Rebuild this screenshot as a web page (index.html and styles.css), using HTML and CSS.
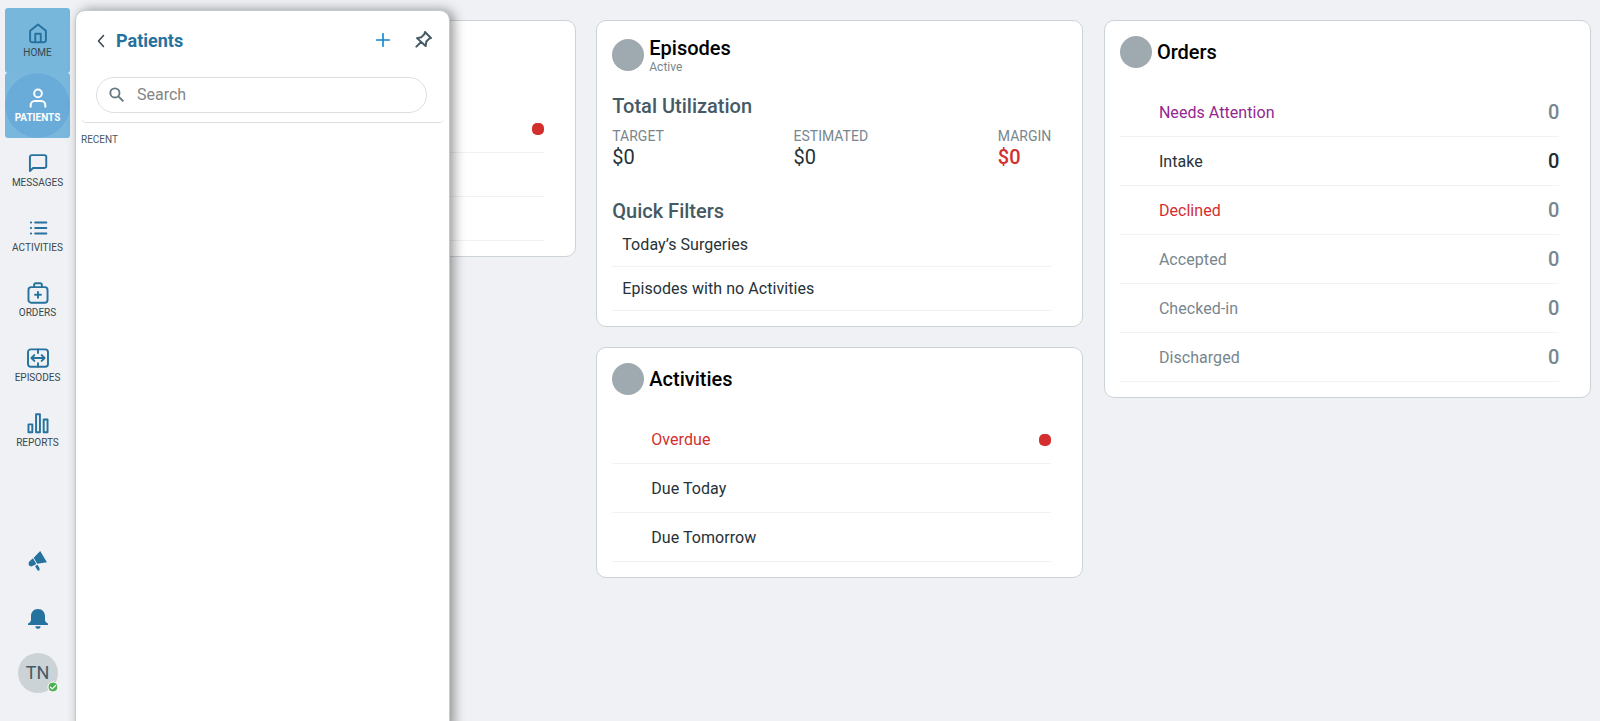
FILE: index.html
```html
<!DOCTYPE html>
<html lang="en">
<head>
<meta charset="utf-8">
<title>Dashboard</title>
<link rel="stylesheet" href="styles.css">
</head>
<body>
<div class="app">
  <nav class="sidebar">
    <a class="nav-item hover"><svg viewBox="0 0 24 24"><path d="M3.4 9.6V20.200a1.800 1.800 0 0 0 1.800 1.800H18.800a1.800 1.800 0 0 0 1.800-1.800V9.600L12 2.600zM9 21.800V12.800h6V21.800"/></svg><span>HOME</span></a>
    <a class="nav-item current"><svg viewBox="0 0 24 24"><circle cx="12" cy="7" r="4.200"/><path d="M4 21.600V19.800a4.500 4.500 0 0 1 4.500-4.500h7A4.500 4.500 0 0 1 20 19.800V21.600"/></svg><span>PATIENTS</span></a>
    <a class="nav-item"><svg viewBox="0 0 24 24"><path d="M3.200 20.800V5.400a2 2 0 0 1 2-2H19a2 2 0 0 1 2 2V15.400a2 2 0 0 1-2 2H6.600z"/></svg><span>MESSAGES</span></a>
    <a class="nav-item"><svg class="list" viewBox="0 0 24 24"><path d="M9 6H21M9 12H21M9 18H21M4.300 6h.1M4.300 12h.1M4.300 18h.1"/></svg><span>ACTIVITIES</span></a>
    <a class="nav-item"><svg viewBox="0 0 24 24"><rect x="1.600" y="5.600" width="20.800" height="17" rx="3"/><path d="M7.800 5.400V3a1.700 1.700 0 0 1 1.700-1.700h5A1.700 1.700 0 0 1 16.200 3V5.400M12 10.800v6.400M8.800 14h6.400"/></svg><span>ORDERS</span></a>
    <a class="nav-item"><svg viewBox="0 0 24 24"><rect x="1.100" y="2.600" width="21.800" height="19" rx="3"/><path d="M12 2.800V6.500M12 17.600V21.400M5 12H19M8 8.800L4.800 12L8 15.200M16 8.800L19.200 12L16 15.200"/></svg><span>EPISODES</span></a>
    <a class="nav-item"><svg viewBox="0 0 24 24"><path d="M1.600 13.500h4.200V22H1.600zM9.900 2.500h4.200V22H9.900zM18.200 8.200h4.200V22H18.200z"/></svg><span>REPORTS</span></a>
    <div class="sidebar-foot">
      <svg class="solid" viewBox="0 0 20 20"><path d="M12.200 0L18.900 11.200 9.200 12.800 5.700 6.800z"/><path d="M5 7.200L8.300 13 4.600 15.100C3 15.800 1.500 15.300.9 14.100S.5 11 1.800 9.900z"/><path d="M7 15l2.800-1.300c.3 1.200.9 1.600 1.300 2.500.6 1.300.8 2.900-.1 3.500-1 .3-1.700-.3-2.200-1.400z"/></svg>
      <svg class="solid" viewBox="0 0 20 20"><path d="M10 0c4.600 0 7 3.400 7 7.300v3c0 2.200.8 3 3 4.300V16H0v-1.400c2.200-1.300 3-2.100 3-4.300v-3C3 3.400 5.400 0 10 0zM7.400 17.200h5.200c0 1.500-1 2.600-2.600 2.600s-2.600-1.100-2.600-2.600z"/></svg>
      <div class="avatar">TN<svg viewBox="0 0 12 12"><circle cx="6" cy="6" r="5" /><path d="M3.500 6.200l1.800 1.700 3.300-3.400"/></svg></div>
    </div>
  </nav>

  <main class="board">
    <section class="card card-back">
      <div class="row short"><i class="dot"></i></div>
      <div class="row short"></div>
      <div class="row short"></div>
    </section>

    <div class="column">
      <section class="card">
        <header class="card-head tall"><i class="disc"></i><div><h2>Episodes</h2><p>Active</p></div></header>
        <h3>Total Utilization</h3>
        <div class="stats">
          <div><span>TARGET</span><b>$0</b></div>
          <div><span>ESTIMATED</span><b>$0</b></div>
          <div class="negative"><span>MARGIN</span><b>$0</b></div>
        </div>
        <h3>Quick Filters</h3>
        <div class="row short">Today’s Surgeries</div>
        <div class="row short">Episodes with no Activities</div>
      </section>
      <section class="card">
        <header class="card-head"><i class="disc"></i><h2>Activities</h2></header>
        <div class="row red">Overdue<i class="dot"></i></div>
        <div class="row">Due Today</div>
        <div class="row">Due Tomorrow</div>
      </section>
    </div>

    <section class="card">
      <header class="card-head"><i class="disc"></i><h2>Orders</h2></header>
      <div class="row purple">Needs Attention<b>0</b></div>
      <div class="row strong">Intake<b>0</b></div>
      <div class="row red">Declined<b>0</b></div>
      <div class="row gray">Accepted<b>0</b></div>
      <div class="row gray">Checked-in<b>0</b></div>
      <div class="row gray">Discharged<b>0</b></div>
    </section>
  </main>

  <aside class="drawer">
    <div class="drawer-top">
      <header class="drawer-head">
        <svg class="back" viewBox="0 0 8 14"><path d="M6.500 1.500L1.500 7L6.500 12.500"/></svg>
        <h1>Patients</h1>
        <svg class="plus" viewBox="0 0 14 14"><path d="M7 .7V13.300M.7 7H13.300"/></svg>
        <svg class="pin" viewBox="0 0 16 16"><path d="M9.400 1L15 6.600L13.400 7.200L10.700 9.900L10 14.200L1.900 6.700L6.100 5.800L8.900 2.800zM5.700 10.400L1.300 14.700"/></svg>
      </header>
      <div class="search"><svg viewBox="0 0 16 16"><circle cx="6.300" cy="6.300" r="4.900"/><path d="M10 10L14.700 14.700"/></svg><span>Search</span></div>
    </div>
    <p class="section-label">RECENT</p>
  </aside>
</div>
</body>
</html>
```
FILE: styles.css
```css
* { box-sizing: border-box; }
body { margin: 0; font-family: Roboto, "Liberation Sans", sans-serif; color: #263238; background: #f0f1f4; }
h1, h2, h3, p { margin: 0; }
i { font-style: normal; }
svg { fill: none; stroke-linecap: round; stroke-linejoin: round; flex: none; }
.app { position: relative; height: 721px; overflow: hidden; display: flex; }

.sidebar { width: 75px; flex: none; padding: 8px 5px 28px; display: flex; flex-direction: column; }
.nav-item { width: 65px; height: 65px; flex: none; border-radius: 3px; display: flex; flex-direction: column; align-items: center; padding-top: 14px; font-size: 10px; line-height: 12px; color: #37474f; }
.nav-item svg { width: 22px; height: 22px; margin-bottom: 3px; margin-left: 1px; stroke: #25729e; stroke-width: 2.100; }
.nav-item svg.list { stroke-width: 2.400; }
.hover { background: #78b7dc; }
.current { background: radial-gradient(circle closest-side, #69acd9 98%, #7ab7dc 100%); color: #fff; font-weight: 700; }
.nav-item.current svg { stroke: #fff; stroke-width: 2.200; }
.sidebar-foot { margin-top: auto; display: flex; flex-direction: column; align-items: center; }
.solid { width: 20px; height: 20px; fill: #25729e; margin-bottom: 38px; }
.solid + .solid { margin-bottom: 24px; }
.avatar { position: relative; width: 40px; height: 40px; border-radius: 50%; background: #cbd3d6; color: #455a64; font-size: 18px; line-height: 40px; text-align: center; }
.avatar svg { position: absolute; right: -1px; bottom: 0; width: 12px; height: 12px; }
.avatar circle { fill: #4caf50; stroke: #fff; stroke-width: 1; }
.avatar path { stroke: #fff; stroke-width: 1.200; }

.board { flex: none; display: grid; grid-template-columns: repeat(3, 487px); gap: 20.6px; align-items: start; padding: 20px 0 0 13.7px; }
.column { display: grid; gap: 20px; }
.card { background: #fff; border: 1px solid #cbd3d8; border-radius: 10px; padding: 15px 31px 15px 15px; }
.card-back { padding-top: 88px; }
.card-head { display: flex; align-items: center; gap: 5px; height: 32px; margin-bottom: 20px; }
.card-head.tall { height: 38px; margin-bottom: 20px; }
.tall h2 { line-height: 22px; }
.tall p { font-size: 12px; line-height: 14px; color: #78868e; padding-top: 1px; margin-bottom: -1px; }
.disc { width: 32px; height: 32px; border-radius: 50%; background: #9eaab0; }
h2 { font-size: 20px; line-height: 24px; font-weight: 500; color: #000; }
h3 { font-size: 20px; line-height: 24px; font-weight: 500; color: #455a64; }
.stats { display: flex; justify-content: space-between; margin: 10px 0 30px; }
.stats span { display: block; font-size: 14px; line-height: 16px; color: #78868e; }
.stats b { display: block; font-size: 20px; line-height: 24px; margin-top: 1px; font-weight: 400; }
.stats .negative b { color: #d32f2f; font-weight: 500; }
.row { display: flex; align-items: center; justify-content: space-between; height: 49px; padding-left: 39px; border-bottom: 1px solid #f0f2f3; font-size: 16px; letter-spacing: .06px; }
.row.short { height: 44px; padding-left: 10px; }
.row b { font-size: 20px; font-weight: 500; letter-spacing: 0; color: #78868e; margin-right: -.6px; }
.row.strong b { color: #212b31; }
.red { color: #d32f2f; }
.purple { color: #93278f; }
.gray { color: #78868e; }
.dot { width: 12px; height: 12px; border-radius: 5px; background: #d32f2f; margin: 2px 0 0 auto; }
.short .dot { margin: 0 0 3px auto; }

.drawer { position: absolute; left: 75px; top: 10px; width: 375px; height: 720px; padding: 0 5px; background: #fff; border: 1px solid #c3cbd0; border-radius: 10px 10px 0 0; box-shadow: 4px 0 12px rgba(0, 0, 0, .4); }
.drawer-top { height: 112px; padding: 0 17px 0 15px; border-bottom: 1px solid #dcdfe0; border-radius: 0 0 5px 5px; }
.drawer-head { height: 60px; margin-bottom: 6px; display: flex; align-items: center; }
.drawer h1 { flex: 1; font-size: 18px; line-height: 24px; font-weight: 700; color: #25729e; margin-left: 11px; }
.back { width: 8px; height: 14px; stroke: #37474f; stroke-width: 1.500; margin-left: 1px; }
.plus { width: 14px; height: 14px; stroke: #0f86cc; stroke-width: 1.600; margin: 0 25.500px 3px 0; }
.pin { width: 17px; height: 17px; stroke: #455a64; stroke-width: 1.900; margin: 0 -5px 4px 0; }
.search { height: 36px; border: 1px solid #dcdfe0; border-radius: 18px; padding-left: 12px; display: flex; align-items: center; gap: 13px; font-size: 16px; color: #858585; }
.search span { margin-bottom: 2px; }
.search svg { width: 15px; height: 15px; margin-bottom: 1px; stroke: #667980; stroke-width: 2; }
.section-label { font-size: 10px; line-height: 12px; color: #455a64; margin-top: 11px; }
```
